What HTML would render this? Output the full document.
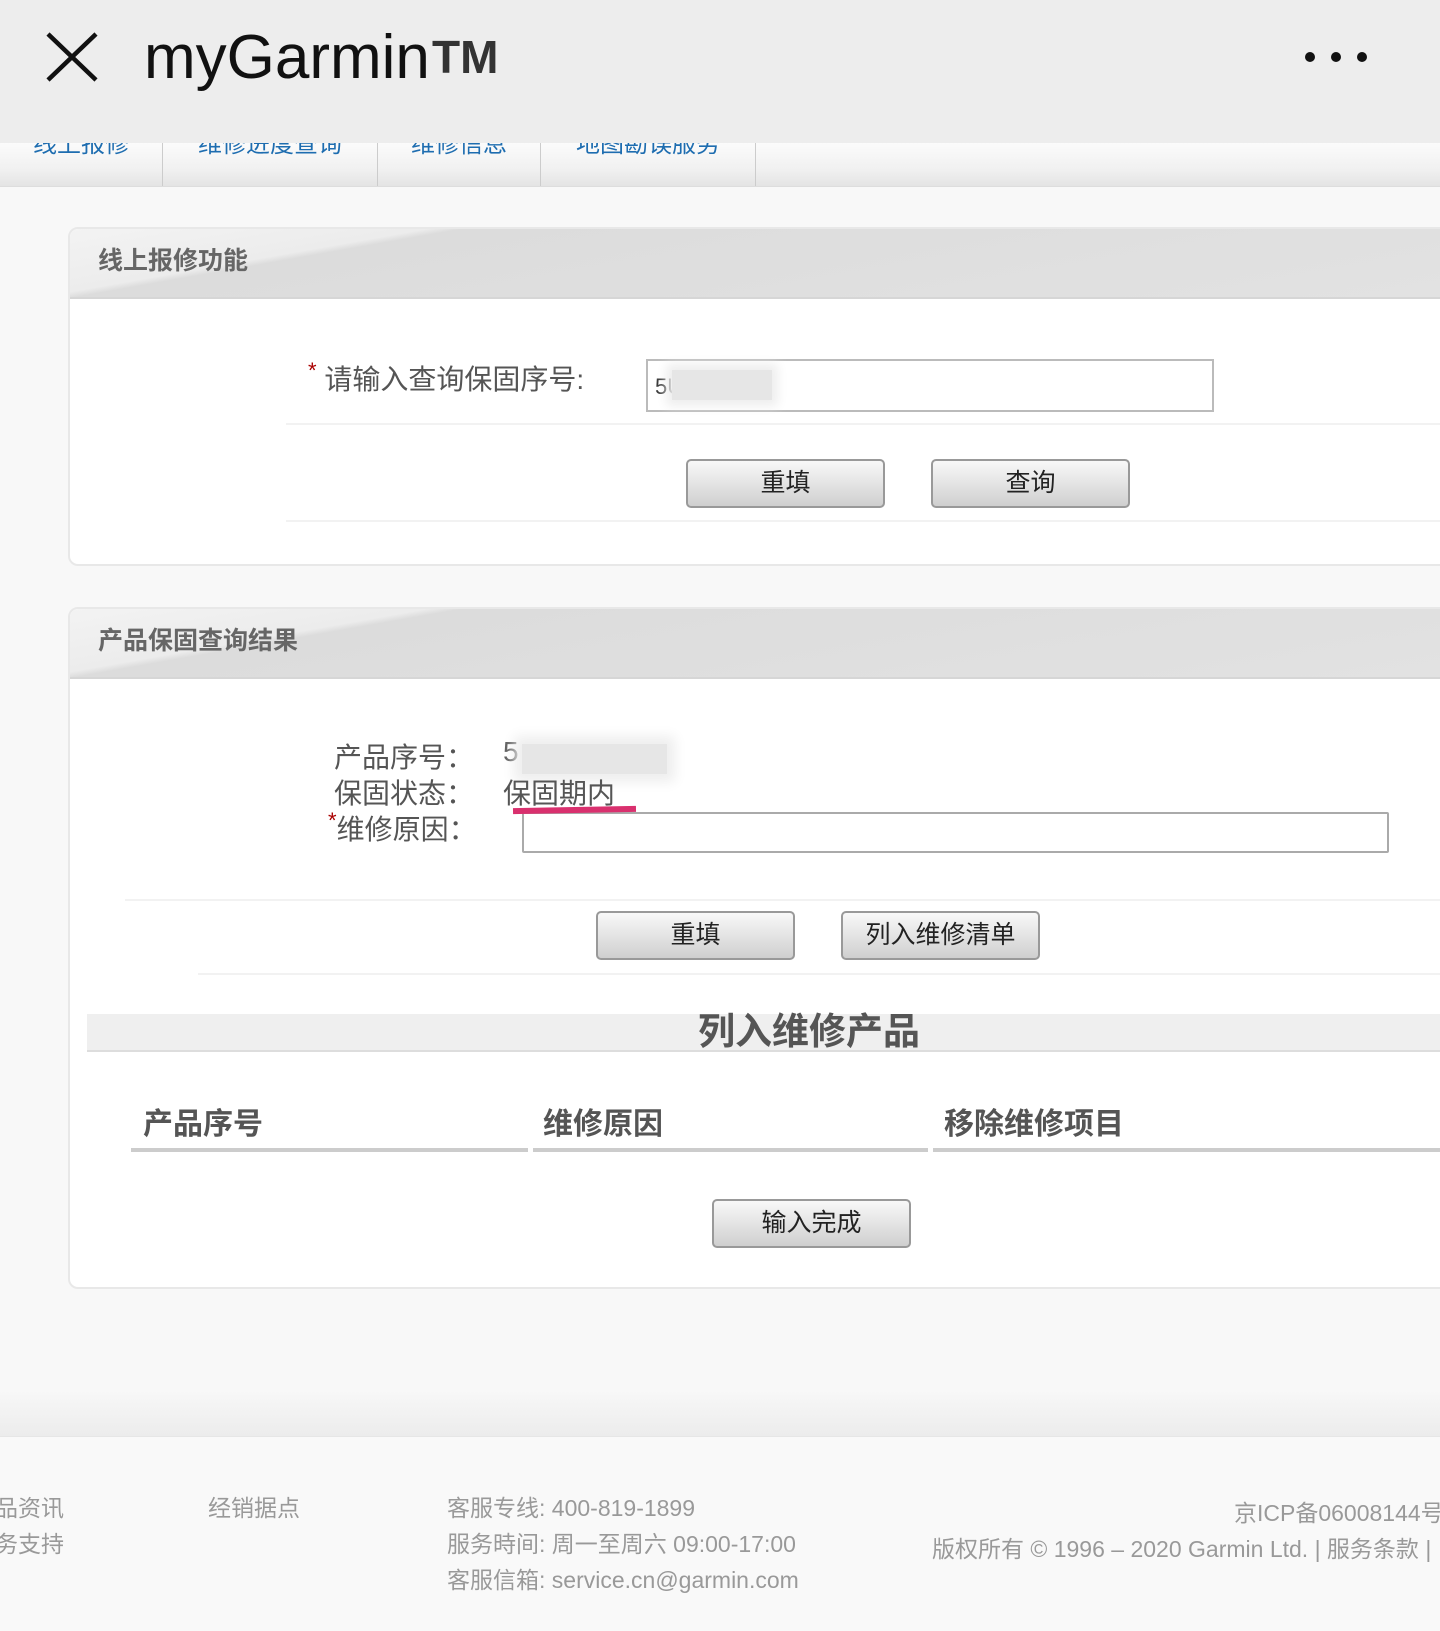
<!DOCTYPE html>
<html><head><meta charset="utf-8"><style>
*{margin:0;padding:0;box-sizing:border-box}
body{width:1440px;height:1631px;overflow:hidden;background:#f8f8f8;font-family:"Liberation Sans","Noto Sans CJK SC",sans-serif;position:relative}
.a{position:absolute;white-space:nowrap}
.hdr{left:0;top:0;width:1440px;height:143px;background:#ededed;z-index:5}
.tabs{left:0;top:143px;width:1440px;height:44px;background:linear-gradient(#fbfbfb,#f1f1f1 60%,#e4e4e4);border-bottom:1px solid #ddd;overflow:hidden}
.tab{position:absolute;top:0;height:44px;border-right:1px solid #ccc;color:#1e6db0;font-size:24px}
.tab span{position:absolute;top:-19px;left:0;width:100%;text-align:center}
.panel{left:68px;width:1400px;background:#fff;border:2px solid #e8e8e8;border-radius:10px}
.ph{position:absolute;left:0;top:0;right:0;height:70px;border-radius:8px 0 0 0;background:linear-gradient(170deg,#f3f3f3 0%,#ececec 20%,#dcdcdc 22%,#e2e2e2 100%);border-bottom:2px solid #d6d6d6}
.ph b{position:absolute;left:28px;top:12px;font-size:25px;color:#666}
.btn{height:49px;width:199px;border:2px solid #999;border-radius:5px;background:linear-gradient(#f8f8f8,#e4e4e4 50%,#cfcfcf);font-size:25px;color:#222;text-align:center;line-height:44px}
.lbl{font-size:28px;color:#555}
.hl{height:2px;background:#f2f2f2}
.ft{font-size:23px;color:#999}
</style></head><body>
<div class="a hdr">
<svg class="a" style="left:46px;top:32px" width="52" height="50" viewBox="0 0 52 50"><path d="M2 2L50 48M50 2L2 48" stroke="#111" stroke-width="4.5"/></svg>
<div class="a" style="left:144px;top:22px;font-size:62px;color:#111;letter-spacing:0px">myGarmin</div>
<div class="a" style="left:432px;top:30px;font-size:46px;font-weight:bold;color:#333">TM</div>
<div class="a" style="left:1305px;top:52px;width:10px;height:10px;border-radius:5px;background:#111"></div>
<div class="a" style="left:1331px;top:52px;width:10px;height:10px;border-radius:5px;background:#111"></div>
<div class="a" style="left:1357px;top:52px;width:10px;height:10px;border-radius:5px;background:#111"></div>
</div>
<div class="a tabs">
<div class="tab" style="left:0;width:163px"><span>线上报修</span></div>
<div class="tab" style="left:163px;width:215px"><span>维修进度查询</span></div>
<div class="tab" style="left:378px;width:163px"><span>维修信息</span></div>
<div class="tab" style="left:541px;width:215px"><span>地图勘误服务</span></div>
</div>

<div class="a panel" style="top:227px;height:339px">
<div class="ph"><b>线上报修功能</b></div>
</div>
<div class="a lbl" style="left:308px;top:358px"><span style="color:#a00;font-size:22px;vertical-align:top">*</span> 请输入查询保固序号:</div>
<div class="a" style="left:646px;top:359px;width:568px;height:53px;border:2px solid #bbb;background:#fff"></div>
<div class="a" style="left:655px;top:374px;font-size:22px;color:#333">5U</div>
<div class="a" style="left:672px;top:370px;width:100px;height:30px;background:#e6e6e6;box-shadow:0 0 10px 6px #eee"></div>
<div class="a hl" style="left:286px;top:423px;width:1154px"></div>
<div class="a btn" style="left:686px;top:459px">重填</div>
<div class="a btn" style="left:931px;top:459px">查询</div>
<div class="a hl" style="left:286px;top:520px;width:1154px"></div>

<div class="a panel" style="top:607px;height:682px">
<div class="ph"><b>产品保固查询结果</b></div>
</div>
<div class="a lbl" style="left:334px;top:736px">产品序号：</div>
<div class="a lbl" style="left:503px;top:736px">5</div>
<div class="a" style="left:522px;top:744px;width:145px;height:30px;background:#e6e6e6;box-shadow:0 0 12px 8px #eee"></div>
<div class="a lbl" style="left:334px;top:772px">保固状态：</div>
<div class="a lbl" style="left:503px;top:772px">保固期内</div>
<div class="a lbl" style="left:328px;top:808px"><span style="color:#a00;font-size:22px;vertical-align:top">*</span>维修原因：</div>
<div class="a" style="left:522px;top:812px;width:867px;height:41px;border:2px solid #aaa;border-radius:2px;background:#fff"></div>
<div class="a" style="left:513px;top:807px;width:123px;height:6px;background:#d9306e;transform:rotate(-1deg)"></div>
<div class="a hl" style="left:125px;top:899px;width:1315px"></div>
<div class="a btn" style="left:596px;top:911px">重填</div>
<div class="a btn" style="left:841px;top:911px">列入维修清单</div>
<div class="a hl" style="left:198px;top:973px;width:1242px"></div>
<div class="a" style="left:87px;top:1014px;width:1353px;height:38px;background:#efefef;border-bottom:2px solid #ddd"></div>
<div class="a" style="left:698px;top:1001px;font-size:37px;font-weight:bold;color:#555">列入维修产品</div>
<div class="a" style="left:143px;top:1099px;font-size:30px;font-weight:bold;color:#555">产品序号</div>
<div class="a" style="left:543px;top:1099px;font-size:30px;font-weight:bold;color:#555">维修原因</div>
<div class="a" style="left:944px;top:1099px;font-size:30px;font-weight:bold;color:#555">移除维修项目</div>
<div class="a" style="left:131px;top:1148px;width:397px;height:4px;background:#ccc"></div>
<div class="a" style="left:533px;top:1148px;width:395px;height:4px;background:#ccc"></div>
<div class="a" style="left:933px;top:1148px;width:507px;height:4px;background:#ccc"></div>
<div class="a btn" style="left:712px;top:1199px">输入完成</div>

<div class="a" style="left:0;top:1390px;width:1440px;height:46px;background:linear-gradient(#f8f8f8,#ececec)"></div>
<div class="a" style="left:0;top:1436px;width:1440px;height:195px;background:#f9f9f9;border-top:1px solid #e6e6e6"></div>
<div class="a ft" style="left:-28px;top:1489px">产品资讯</div>
<div class="a ft" style="left:-28px;top:1525px">服务支持</div>
<div class="a ft" style="left:208px;top:1489px">经销据点</div>
<div class="a ft" style="left:447px;top:1489px">客服专线: 400-819-1899</div>
<div class="a ft" style="left:447px;top:1525px">服务時间: 周一至周六 09:00-17:00</div>
<div class="a ft" style="left:447px;top:1561px">客服信箱: service.cn@garmin.com</div>
<div class="a ft" style="left:1234px;top:1494px">京ICP备06008144号</div>
<div class="a ft" style="left:932px;top:1530px">版权所有 © 1996 – 2020 Garmin Ltd. | 服务条款 |</div>
</body></html>
